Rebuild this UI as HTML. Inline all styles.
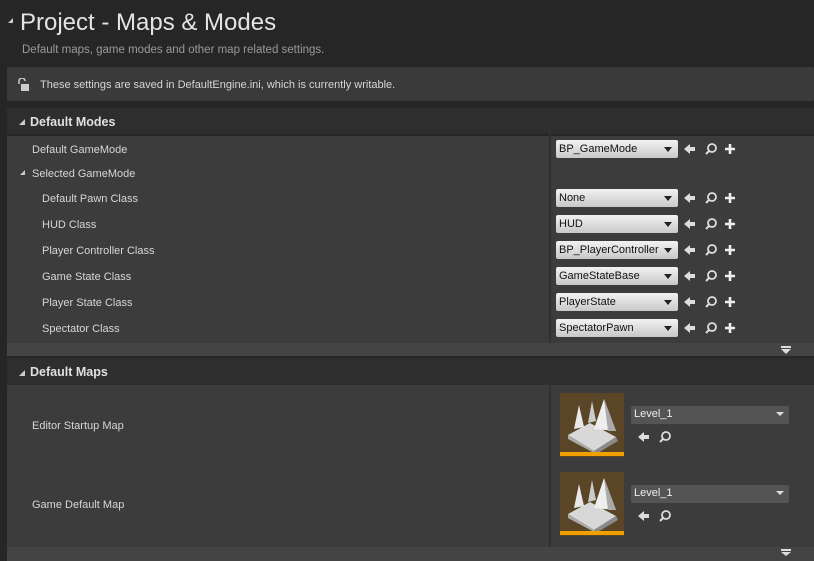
<!DOCTYPE html>
<html><head><style>
body{margin:0;width:814px;height:561px;background:#262626;font-family:"Liberation Sans",sans-serif;position:relative;overflow:hidden;color:#d0d0d0}
.a{position:absolute}
.t{font-size:11px;color:#d6d6d6}
.hdr{background:#2e2e2e;left:7px;right:0;height:26px}
.row{background:#3c3c3c;left:7px;right:0}
.div{left:549px;width:2px;background:#303030}
.combo{left:556px;width:122px;height:18px;border-radius:2px;background:linear-gradient(#f2f2f2,#c8c8c8);color:#111;font-size:11px;line-height:19px;padding-left:3px;box-sizing:border-box}
.combo:after{content:"";position:absolute;right:6px;top:7px;border:4px solid transparent;border-top:5px solid #222;border-bottom:0}
.tri{width:0;height:0;border-left:6px solid transparent;border-bottom:6px solid #ccc}
</style></head><body>
<div class="a tri" style="left:8px;top:18px;border-left-width:5px;border-bottom-width:5px"></div>
<div class="a" style="left:20px;top:9px;font-size:24px;color:#e4e4e4">Project - Maps &amp; Modes</div>
<div class="a" style="left:22px;top:44px;font-size:11.5px;color:#9a9a9a">Default maps, game modes and other map related settings.</div>
<div class="a" style="left:7px;top:67px;right:0;height:34px;background:#3a3a3a;border-radius:2px"></div>
<svg class="a" style="left:17px;top:78px" width="14" height="14"><path d="M2 6V3a3 3 0 0 1 6 0" stroke="#ccc" stroke-width="1.5" fill="none"/><rect x="4" y="6" width="8" height="7" fill="#ccc"/></svg>
<div class="a t" style="left:40px;top:79px">These settings are saved in DefaultEngine.ini, which is currently writable.</div>

<div class="a hdr" style="top:108px"></div>
<div class="a tri" style="left:19px;top:119px"></div>
<div class="a" style="left:30px;top:115px;font-size:12.5px;font-weight:bold;color:#e0e0e0">Default Modes</div>
<div class="a row" style="top:136px;height:207px"></div>
<div class="a" style="left:7px;right:0;top:343px;height:13px;background:#444"></div>
<div class="a div" style="top:108px;height:235px"></div>
<div class="a t" style="left:32px;top:144px">Default GameMode</div>
<div class="a tri" style="left:20px;top:170px;border-left-width:5px;border-bottom-width:5px"></div>
<div class="a t" style="left:32px;top:168px">Selected GameMode</div>
<div class="a t" style="left:42px;top:193px">Default Pawn Class</div>
<div class="a t" style="left:42px;top:219px">HUD Class</div>
<div class="a t" style="left:42px;top:245px">Player Controller Class</div>
<div class="a t" style="left:42px;top:271px">Game State Class</div>
<div class="a t" style="left:42px;top:297px">Player State Class</div>
<div class="a t" style="left:42px;top:323px">Spectator Class</div>

<div class="a combo" style="top:140px">BP_GameMode</div>
<div class="a combo" style="top:189px">None</div>
<div class="a combo" style="top:215px">HUD</div>
<div class="a combo" style="top:241px">BP_PlayerController</div>
<div class="a combo" style="top:267px">GameStateBase</div>
<div class="a combo" style="top:293px">PlayerState</div>
<div class="a combo" style="top:319px">SpectatorPawn</div>

<svg class="a" style="left:0;top:0" width="814" height="561">
<defs>
<g id="ic"><path d="M-6 0L0-5V-2H5V2H0V5Z" fill="#ddd"/><circle cx="22" cy="-1" r="4" stroke="#ddd" stroke-width="1.8" fill="none"/><path d="M19 2L16 5" stroke="#ddd" stroke-width="2"/></g>
<g id="pl"><path d="M0-5V5M-5 0H5" stroke="#eee" stroke-width="2.6"/></g>
<g id="th"><rect x="0" y="0" width="64" height="64" fill="#5a4526"/><path d="M8 42L30 30L56 44L34 58Z" fill="#d8d8d8"/><path d="M34 58L56 44L58 48L36 61Z" fill="#8a8a8a"/><path d="M8 42L34 58L36 61L8 46Z" fill="#aaa"/><path d="M14 36L19 12L24 34Z" fill="#e8e8e8"/><path d="M28 30L32 8L36 28Z" fill="#ccc"/><path d="M34 36L44 6L56 38Z" fill="#eee"/><path d="M44 6L56 38L48 38Z" fill="#aaa"/><rect x="0" y="59" width="64" height="4" fill="#f0a000"/></g>
</defs>
<use href="#ic" x="690" y="149"/><use href="#pl" x="730" y="149"/>
<use href="#ic" x="690" y="198"/><use href="#pl" x="730" y="198"/>
<use href="#ic" x="690" y="224"/><use href="#pl" x="730" y="224"/>
<use href="#ic" x="690" y="250"/><use href="#pl" x="730" y="250"/>
<use href="#ic" x="690" y="276"/><use href="#pl" x="730" y="276"/>
<use href="#ic" x="690" y="302"/><use href="#pl" x="730" y="302"/>
<use href="#ic" x="690" y="328"/><use href="#pl" x="730" y="328"/>
</svg>
<div class="a" style="left:781px;top:346px;width:10px;height:2px;background:#ddd"></div>
<div class="a" style="left:781px;top:349px;border:5px solid transparent;border-top:5px solid #ddd;border-bottom:0"></div>

<div class="a hdr" style="top:358px;height:27px"></div>
<div class="a tri" style="left:19px;top:370px"></div>
<div class="a" style="left:30px;top:365px;font-size:12.5px;font-weight:bold;color:#e0e0e0">Default Maps</div>
<div class="a row" style="top:385px;height:162px"></div>
<div class="a" style="left:7px;right:0;top:547px;height:14px;background:#444"></div>
<div class="a div" style="top:358px;height:189px"></div>
<div class="a t" style="left:32px;top:420px">Editor Startup Map</div>
<div class="a t" style="left:32px;top:499px">Game Default Map</div>
<div class="a" style="left:631px;top:406px;width:158px;height:18px;background:#545454;border-radius:2px;color:#eee;font-size:11px;line-height:17px;padding-left:3px;box-sizing:border-box">Level_1</div>
<div class="a" style="left:631px;top:485px;width:158px;height:18px;background:#545454;border-radius:2px;color:#eee;font-size:11px;line-height:17px;padding-left:3px;box-sizing:border-box">Level_1</div>
<svg class="a" style="left:0;top:0" width="814" height="561">
<use href="#th" x="560" y="393"/><use href="#th" x="560" y="472"/>
<use href="#ic" x="644" y="437"/><use href="#ic" x="644" y="516"/>
<path d="M776 412h8l-4 4z M776 491h8l-4 4z" fill="#ddd"/>
<path d="M781 549h10v2h-10z M781 552h10l-5 4z" fill="#ddd"/>
</svg>
</body></html>
